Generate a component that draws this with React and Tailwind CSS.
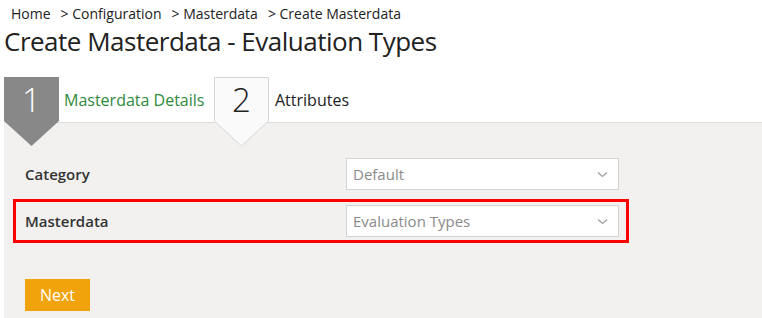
import React from 'react';

// Create Masterdata wizard — step 1 of 2

const FONT = "font-['Segoe_UI','Open_Sans','Noto_Sans',sans-serif]";

function StepTab({ number, active }) {
  // pentagon marker: box on top, arrow pointing into the panel below
  return (
    <div className="relative w-[55px] h-[45px] shrink-0">
      <svg
        className="absolute left-0 top-0"
        width="55"
        height="70"
        viewBox="0 0 55 70"
        aria-hidden="true"
      >
        {active ? (
          <polygon points="0,0 55,0 55,44 27.5,69 0,44" fill="#888888" />
        ) : (
          <polygon
            points="0.5,0.5 54.5,0.5 54.5,44 27.5,69 0.5,44"
            fill="#fafafa"
            stroke="#d6d6d6"
          />
        )}
      </svg>
      <span
        className={`relative flex h-[45px] items-center justify-center text-[33px] font-light leading-none ${
          active ? 'text-white' : 'text-[#222]'
        }`}
      >
        {number}
      </span>
    </div>
  );
}

function Select({ value }) {
  return (
    <div className="flex h-[32px] w-[273px] items-center justify-between border border-[#d4d4d4] bg-white pl-[6px] pr-[10px]">
      <span className="text-[15px] text-[#8a8a8a]">{value}</span>
      <svg width="11" height="7" viewBox="0 0 11 7" fill="none" stroke="#a0a0a0" strokeWidth="1.3" aria-hidden="true">
        <path d="M1 1.5l4.5 4 4.5-4" />
      </svg>
    </div>
  );
}

export default function App() {
  return (
    <div className={`flex h-[318px] w-[762px] flex-col overflow-hidden bg-white ${FONT}`}>
      {/* breadcrumb */}
      <div className="flex gap-[10px] pl-[11px] pt-[4px] text-[14px] leading-[19px] text-[#222]">
        <span>Home</span>
        <span>&gt; Configuration</span>
        <span>&gt; Masterdata</span>
        <span>&gt; Create Masterdata</span>
      </div>
      <h1 className="pl-[4px] text-[26px] leading-[36px] tracking-[-0.5px] text-[#222]">
        Create Masterdata - Evaluation Types
      </h1>

      {/* wizard steps */}
      <div className="relative z-10 mt-[18px] flex h-[45px] items-center pl-[4px]">
        <StepTab number="1" active />
        <span className="ml-[5px] w-[150px] text-[16px] text-[#2f8a3c]">Masterdata Details</span>
        <StepTab number="2" />
        <span className="ml-[6px] text-[16px] text-[#222]">Attributes</span>
      </div>

      {/* form panel */}
      <div className="ml-[4px] flex flex-1 flex-col border-t border-[#dcdcdc] bg-[#f2f1f0] pt-[35px]">
        <div className="flex items-center pl-[21px] pr-[142px]">
          <span className="w-[321px] text-[15px] font-semibold text-[#333]">Category</span>
          <Select value="Default" />
        </div>
        <div className="ml-[9px] mr-[133px] mt-[9px] flex h-[44px] items-center border-[3px] border-[#ff0000] pl-[9px]">
          <span className="w-[321px] text-[15px] font-semibold text-[#333]">Masterdata</span>
          <Select value="Evaluation Types" />
        </div>
        <div className="pl-[21px] pt-[36px]">
          <button className="h-[32px] w-[65px] bg-[#f0a30a] text-[16px] text-white">Next</button>
        </div>
      </div>
    </div>
  );
}
